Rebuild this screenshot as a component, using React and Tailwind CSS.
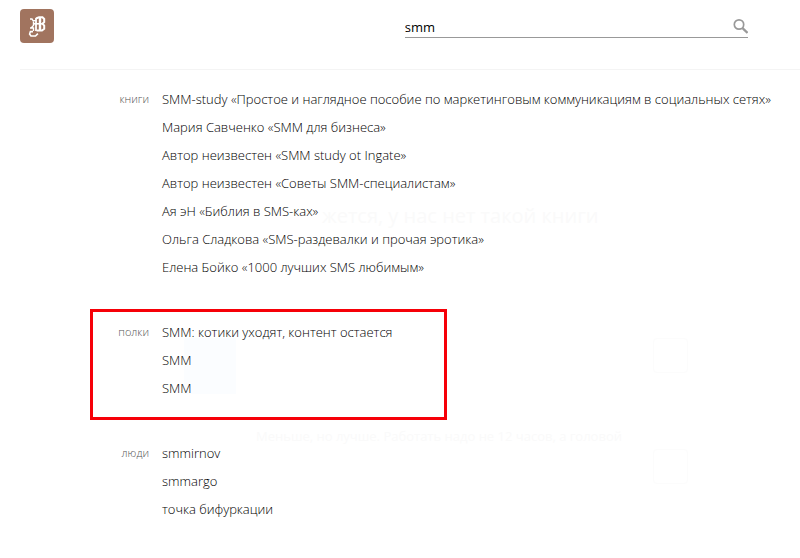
import { useState } from "react";

const GROUPS = [
  {
    id: "books",
    title: "книги",
    items: [
      "SMM-study «Простое и наглядное пособие по маркетинговым коммуникациям в социальных сетях»",
      "Мария Савченко «SMM для бизнеса»",
      "Автор неизвестен «SMM study ot Ingate»",
      "Автор неизвестен «Советы SMM-специалистам»",
      "Ая эН «Библия в SMS-ках»",
      "Ольга Сладкова «SMS-раздевалки и прочая эротика»",
      "Елена Бойко «1000 лучших SMS любимым»",
    ],
  },
  {
    id: "shelves",
    title: "полки",
    highlighted: true,
    items: ["SMM: котики уходят, контент остается", "SMM", "SMM"],
  },
  {
    id: "people",
    title: "люди",
    items: ["smmirnov", "smmargo", "точка бифуркации"],
  },
];

function Logo() {
  return (
    <a href="#home" aria-label="На главную" className="block size-[34px] rounded bg-[#a1745f]">
      <svg viewBox="0 0 34 34" className="size-full" fill="none" stroke="#fff">
        <path d="M16 9v13" strokeWidth="1.8" />
        <path d="M20 8v14" strokeWidth="2.4" />
        <path d="M16 9.5l3-1.2h3.5l1.7 1.7v3l-1.7 1.8 1.7 1.8v3.2L22 21.6h-5.5" strokeWidth="2" />
        <path d="M13 14.8h9.5" strokeWidth="1.6" />
        <path d="M10 10h2l1 1.6h3M13.5 12.5v4L11 19M10 19h3.5v3" strokeWidth="1.4" />
        <path d="M13 22.6h-2.6L9.6 25l1.4 2h4.5l2.4-2.4" strokeWidth="1.6" />
      </svg>
    </a>
  );
}

function SearchForm() {
  const [query, setQuery] = useState("smm");

  return (
    <form
      role="search"
      onSubmit={(e) => e.preventDefault()}
      className="mr-[52px] flex h-6 w-[46%] items-center border-b border-[#999]"
    >
      <input
        type="text"
        aria-label="Поиск"
        value={query}
        onChange={(e) => setQuery(e.target.value)}
        className="min-w-0 flex-1 bg-transparent pt-1 text-[13px] text-black outline-none"
      />
      <button type="submit" aria-label="Найти" className="text-[#999]">
        <svg viewBox="0 0 16 16" className="size-4" fill="none" stroke="currentColor">
          <circle cx="7" cy="6.5" r="4.7" strokeWidth="1.7" />
          <path d="M10.5 10.1l5 4.8" strokeWidth="2.2" />
        </svg>
      </button>
    </form>
  );
}

function ResultGroup({ group }) {
  return (
    <section
      aria-labelledby={group.id}
      className={`flex w-fit border-[3px] pt-1.5 pb-[15px] ${
        group.highlighted ? "min-w-[357px] border-[#f60008]" : "border-transparent"
      }`}
    >
      <h2 id={group.id} className="w-14 shrink-0 text-right text-[11px] leading-7 font-light text-[#555]">
        {group.title}
      </h2>
      <ul className="ml-[13px] text-[13px] leading-7 font-light text-black">
        {group.items.map((item, i) => (
          <li key={i}>
            <a href="#result">{item}</a>
          </li>
        ))}
      </ul>
    </section>
  );
}

// page under the search overlay, almost fully covered with white
function Backdrop() {
  return (
    <div aria-hidden="true" className="pointer-events-none absolute inset-0 -z-10 overflow-hidden text-[#fafafa]">
      <p className="absolute top-[202px] left-[322px] text-xl">жется, у нас нет такой книги</p>
      <div className="absolute top-[338px] left-[184px] h-14 w-[52px] bg-[#fbfdff]" />
      <div className="absolute top-[338px] left-[653px] size-[35px] rounded border border-[#fcfcfc]" />
      <p className="absolute top-[427px] left-[256px] text-[13px]">
        Меньше, но лучше. Работать надо не 12 часов, а головой
      </p>
      <div className="absolute top-[449px] left-[653px] size-[35px] rounded border border-[#fcfcfc]" />
    </div>
  );
}

export default function App() {
  return (
    <div className="relative isolate min-h-screen bg-white font-['Open_Sans','Noto_Sans',sans-serif]">
      <Backdrop />
      <header className="ml-5 flex h-[70px] items-start justify-between border-b border-[#f4f4f4] pt-[9px]">
        <Logo />
        <div className="flex flex-1 justify-end pt-[5px]">
          <SearchForm />
        </div>
      </header>
      <main className="flex flex-col gap-2.5 pt-1.5 pl-[90px]">
        {GROUPS.map((group) => (
          <ResultGroup key={group.id} group={group} />
        ))}
      </main>
    </div>
  );
}
